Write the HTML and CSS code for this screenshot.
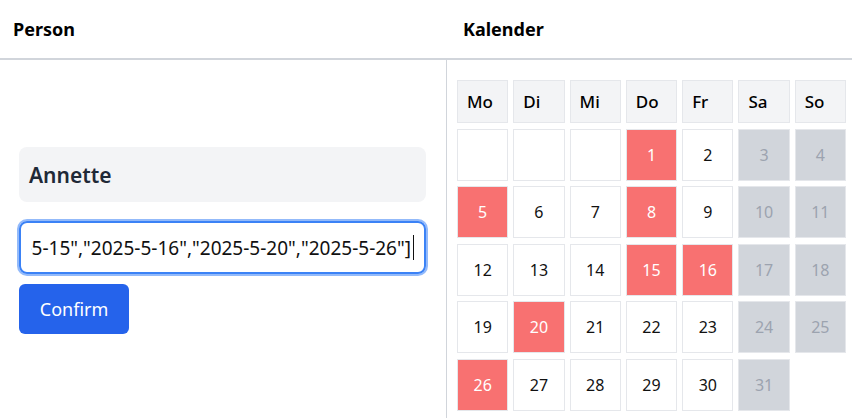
FILE: index.html
```html
<!DOCTYPE html>
<html lang="de">
<head>
<meta charset="utf-8">
<title>Kalender</title>
<link rel="stylesheet" href="styles.css">
</head>
<body>
<div class="app">
  <div class="header">
    <div class="h-left">Person</div>
    <div class="h-right">Kalender</div>
  </div>
  <div class="main">
    <div class="left">
      <div class="name">Annette</div>
      <div class="field"><div class="field-text"><span>["2025-5-1","2025-5-5","2025-5-8","2025-5-15","2025-5-16","2025-5-20","2025-5-26"]</span><span class="caret"></span></div></div>
      <button class="btn">Confirm</button>
    </div>
    <div class="right">
      <div class="cal">
        <div class="dh">Mo</div><div class="dh">Di</div><div class="dh">Mi</div><div class="dh">Do</div><div class="dh">Fr</div><div class="dh">Sa</div><div class="dh">So</div>
        <div class="d"></div><div class="d"></div><div class="d"></div><div class="d sel">1</div><div class="d">2</div><div class="d we">3</div><div class="d we">4</div>
        <div class="d sel">5</div><div class="d">6</div><div class="d">7</div><div class="d sel">8</div><div class="d">9</div><div class="d we">10</div><div class="d we">11</div>
        <div class="d">12</div><div class="d">13</div><div class="d">14</div><div class="d sel">15</div><div class="d sel">16</div><div class="d we">17</div><div class="d we">18</div>
        <div class="d">19</div><div class="d sel">20</div><div class="d">21</div><div class="d">22</div><div class="d">23</div><div class="d we">24</div><div class="d we">25</div>
        <div class="d sel">26</div><div class="d">27</div><div class="d">28</div><div class="d">29</div><div class="d">30</div><div class="d we">31</div>
      </div>
    </div>
  </div>
</div>
</body>
</html>
```
FILE: styles.css
```css
* { box-sizing: border-box; }
html, body { margin: 0; padding: 0; background: #fff; }
body {
  font-family: "Noto Sans", "Open Sans", sans-serif;
  color: #111827;
}
.app { width: 852px; height: 418px; overflow: hidden; }
.header {
  display: grid;
  grid-template-columns: 447px 1fr;
  height: 60px;
  border-bottom: 2px solid #d1d5db;
  font-weight: 700;
  font-size: 18px;
  color: #000;
}
.h-left, .h-right { display: flex; align-items: center; }
.h-left { padding-left: 13px; }
.h-right { padding-left: 16px; }
.main {
  display: grid;
  grid-template-columns: 447px 1fr;
  height: 358px;
}
.left {
  border-right: 1px solid #d1d5db;
  padding: 87px 20px 0 19px;
  display: flex;
  flex-direction: column;
  align-items: flex-start;
}
.name {
  width: 100%;
  height: 55px;
  background: #f3f4f6;
  border-radius: 8px;
  padding-left: 10px;
  display: flex;
  align-items: center;
  font-size: 21px;
  font-weight: 600;
  color: #1f2937;
}
.field {
  width: 100%;
  height: 53px;
  margin-top: 19px;
  border: 2px solid #3b82f6;
  box-shadow: 0 0 0 2px rgba(59, 130, 246, 0.55);
  border-radius: 8px;
  padding: 0 10px;
  display: flex;
  align-items: center;
  overflow: hidden;
}
.field-text {
  width: 100%;
  display: flex;
  justify-content: flex-end;
  align-items: center;
  white-space: nowrap;
  overflow: hidden;
  font-size: 19px;
  color: #111;
}
.field-text span { flex: none; }
.caret {
  width: 1px;
  height: 25px;
  background: #111;
  margin-left: 2px;
}
.btn {
  margin-top: 10px;
  width: 110px;
  height: 50px;
  border: none;
  border-radius: 6px;
  background: #2563eb;
  color: #fff;
  font-family: inherit;
  font-size: 18px;
  padding: 0;
}
.right { padding: 20px 0 0 10px; }
.cal {
  width: 389px;
  display: grid;
  grid-template-columns: repeat(7, 1fr);
  grid-template-rows: 43px repeat(5, 52px);
  column-gap: 5px;
  row-gap: 5.5px;
}
.dh {
  background: #f3f4f6;
  border: 1px solid #e5e7eb;
  display: flex;
  align-items: center;
  padding-left: 9px;
  font-size: 17px;
  font-weight: 500;
  color: #000;
}
.d {
  border: 1px solid #e5e7eb;
  display: flex;
  align-items: center;
  justify-content: center;
  font-size: 16px;
  color: #111;
}
.d.sel { background: #f87171; color: #fff; }
.d.we { background: #d1d5db; color: #9ca3af; }
```
